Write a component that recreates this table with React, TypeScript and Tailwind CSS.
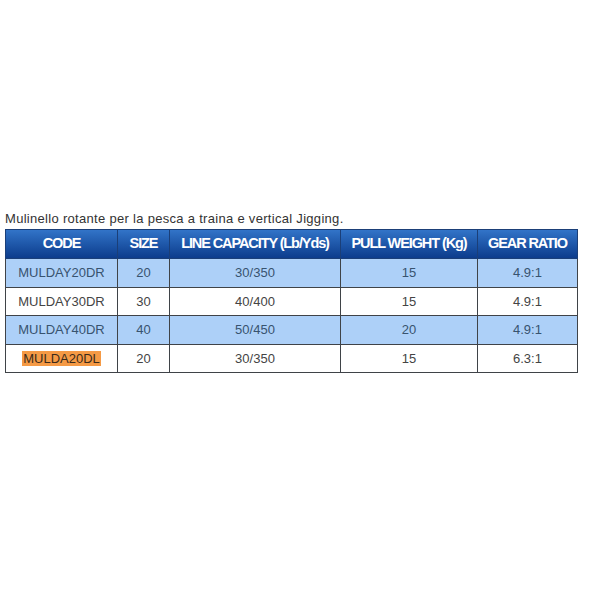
import React from "react";

const rows = [
  { code: "MULDAY20DR", size: "20", line: "30/350", pull: "15", gear: "4.9:1", blue: true },
  { code: "MULDAY30DR", size: "30", line: "40/400", pull: "15", gear: "4.9:1", blue: false },
  { code: "MULDAY40DR", size: "40", line: "50/450", pull: "20", gear: "4.9:1", blue: true },
  { code: "MULDA20DL", size: "20", line: "30/350", pull: "15", gear: "6.3:1", blue: false, mark: true },
];

const headers = ["CODE", "SIZE", "LINE CAPACITY (Lb/Yds)", "PULL WEIGHT (Kg)", "GEAR RATIO"];

const App = () => {
  return (
    <div className="w-[600px] h-[600px] bg-white pt-[211px] pl-[5px] font-['Liberation_Sans',Arial,sans-serif]">
      <p className="text-[13px] leading-[16px] text-[#333] tracking-[0.3px]">
        Mulinello rotante per la pesca a traina e vertical Jigging.
      </p>
      <table className="mt-[2px] w-[572px] border-collapse table-fixed">
        <colgroup>
          <col className="w-[112px]" />
          <col className="w-[52px]" />
          <col className="w-[171px]" />
          <col className="w-[137px]" />
          <col className="w-[100px]" />
        </colgroup>
        <thead>
          <tr className="h-[29px] bg-gradient-to-b from-[#3274c8] to-[#0b3a8a]">
            {headers.map(h => (
              <th
                key={h}
                className="border border-[#1b3f78] p-0 text-center text-white font-bold text-[14.5px] tracking-[-1.1px] whitespace-nowrap"
              >
                {h}
              </th>
            ))}
          </tr>
        </thead>
        <tbody>
          {rows.map(r => (
            <tr key={r.code} className={`h-[28.5px] ${r.blue ? "bg-[#add0f8] text-[#38536f]" : "bg-white text-[#444]"}`}>
              <td className="border border-[#3f4348] p-0 text-center text-[13px]">
                {r.mark ? <span className="bg-[#f59a45] text-[#3b2a1a] px-[1px]">{r.code}</span> : r.code}
              </td>
              <td className="border border-[#3f4348] p-0 text-center text-[13px]">{r.size}</td>
              <td className="border border-[#3f4348] p-0 text-center text-[13px]">{r.line}</td>
              <td className="border border-[#3f4348] p-0 text-center text-[13px]">{r.pull}</td>
              <td className="border border-[#3f4348] p-0 text-center text-[13px]">{r.gear}</td>
            </tr>
          ))}
        </tbody>
      </table>
    </div>
  );
};

export default App;
